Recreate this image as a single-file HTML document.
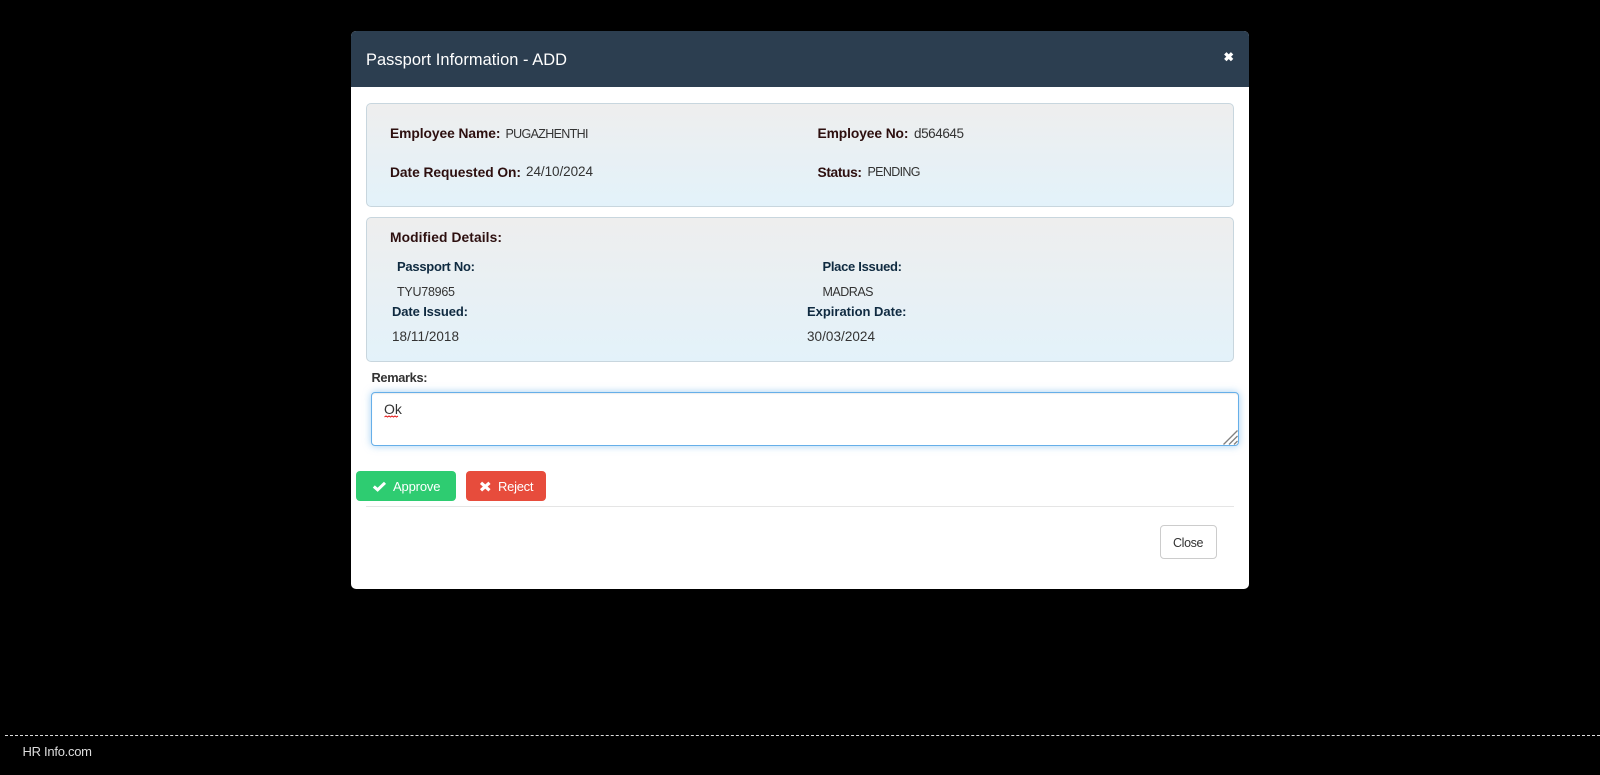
<!DOCTYPE html>
<html lang="en">
<head>
<meta charset="utf-8">
<title>Passport Information - ADD</title>
<style>
html,body{margin:0;padding:0;width:1600px;height:775px;overflow:hidden;background:#000;font-family:"Liberation Sans",sans-serif}
.box{position:absolute;box-sizing:border-box}
.modal{left:351px;top:31px;width:898px;height:558px;background:#fff;border-radius:5px;overflow:hidden}
.head{left:0;top:0;width:898px;height:56px;background:#2c3e50}
.panel{left:366px;width:868px;border:1px solid #c8d6de;border-radius:5px;background:linear-gradient(to bottom,#eeeeee 0%,#e3f2fa 100%)}
textarea{position:absolute;box-sizing:border-box;left:371px;top:392px;width:868px;height:54px;margin:0;padding:6px 12px;border:1px solid #66afe9;border-radius:4px;outline:0;background:#fff;color:#333;font:14px/20px "Liberation Sans",sans-serif;resize:none;overflow:hidden;box-shadow:inset 0 1px 1px rgba(0,0,0,.075),0 0 8px rgba(102,175,233,.6)}
.btn{height:30px;top:471px;border-radius:4px}
.hr{left:366px;top:506px;width:868px;height:1px;background:#e5e5e5}
.close{left:1160px;top:525px;width:57px;height:34px;border:1px solid #ccc;border-radius:4px;background:#fff}
.foot{left:5px;top:735px;width:1595px;height:0;border-top:1px dashed #ddd}
svg{position:absolute;left:0;top:0;width:1600px;height:775px;pointer-events:none}
text{font-family:"Liberation Sans",sans-serif;font-size:13.5px;fill:#333;white-space:pre}
.c{font-size:12.5px}
.l{font-weight:700;fill:#2d0f0f;font-size:13.8px}
.m{font-weight:700;fill:#0f2a40;font-size:13px}
</style>
</head>
<body>
<div class="box modal"><div class="box head"></div></div>
<div class="box panel" style="top:103px;height:104px"></div>
<div class="box panel" style="top:217px;height:145px"></div>
<textarea spellcheck="false">Ok</textarea>
<div class="box btn" style="left:356px;width:100px;background:#2ecc71"></div>
<div class="box btn" style="left:466px;width:80px;background:#e74c3c"></div>
<div class="box hr"></div>
<div class="box close"></div>
<div class="box foot"></div>
<svg viewBox="0 0 1600 775" xmlns="http://www.w3.org/2000/svg">
  <text x="366" y="65" textLength="201" lengthAdjust="spacing" style="font-size:16.4px;fill:#fff">Passport Information - ADD</text>
  <path d="M1225.300 53.300l6.800 6.800M1232.100 53.300l-6.800 6.800" stroke="#fff" stroke-width="3.400" fill="none"/>

  <text class="l" x="390" y="138" textLength="110.500" lengthAdjust="spacing">Employee Name:</text>
  <text class="c" x="505.500" y="138" textLength="83" lengthAdjust="spacing">PUGAZHENTHI</text>
  <text class="l" x="817.500" y="138" textLength="91" lengthAdjust="spacing">Employee No:</text>
  <text x="914" y="138" textLength="50" lengthAdjust="spacing">d564645</text>
  <text class="l" x="390" y="177" textLength="131" lengthAdjust="spacing">Date Requested On:</text>
  <text x="526" y="176" textLength="67" lengthAdjust="spacing">24/10/2024</text>
  <text class="l" x="817.500" y="177" textLength="44.500" lengthAdjust="spacing">Status:</text>
  <text class="c" x="867.500" y="176" textLength="53" lengthAdjust="spacing">PENDING</text>

  <text class="l" x="390" y="242" textLength="112" lengthAdjust="spacing">Modified Details:</text>
  <text class="m" x="397" y="271" textLength="78" lengthAdjust="spacing">Passport No:</text>
  <text class="c" x="397" y="296" textLength="58" lengthAdjust="spacing">TYU78965</text>
  <text class="m" x="822.500" y="271" textLength="79.500" lengthAdjust="spacing">Place Issued:</text>
  <text class="c" x="822.500" y="296" textLength="51" lengthAdjust="spacing">MADRAS</text>
  <text class="m" x="392" y="316" textLength="76" lengthAdjust="spacing">Date Issued:</text>
  <text x="392" y="341" textLength="67" lengthAdjust="spacing">18/11/2018</text>
  <text class="m" x="807" y="316" textLength="99.500" lengthAdjust="spacing">Expiration Date:</text>
  <text x="807" y="341" textLength="68" lengthAdjust="spacing">30/03/2024</text>

  <text x="371.500" y="382" textLength="56" lengthAdjust="spacing" style="font-weight:700;fill:#333;font-size:12.800px">Remarks:</text>
  <path d="M384.500 417l1.500-1 1.500 1 1.500-1 1.500 1 1.500-1 1.500 1 1.500-1 1.500 1 1.500-1" stroke="#e01010" stroke-width="1" fill="none"/>
  <path d="M1223.500 444.500l14-14M1229 444.500l8.500-8.500M1234 444.500l3.500-3.500" stroke="#808080" stroke-width="1.300" fill="none"/>

  <path d="M373.800 486.500l3.800 3.300 7.400-7" stroke="#fff" stroke-width="3" fill="none"/>
  <text x="393" y="491" textLength="47.500" lengthAdjust="spacing" style="fill:#fff;font-size:13px">Approve</text>
  <path d="M481 482.800l8.500 7.500M489.500 482.800l-8.500 7.500" stroke="#fff" stroke-width="3.200" fill="none"/>
  <text x="498" y="491" textLength="35.500" lengthAdjust="spacing" style="fill:#fff;font-size:13px">Reject</text>

  <text x="1173" y="547" textLength="30.500" lengthAdjust="spacing" style="font-size:12.500px">Close</text>
  <text x="22.500" y="756" textLength="69.500" lengthAdjust="spacing" style="fill:#ddd;font-size:13px">HR Info.com</text>
</svg>
</body>
</html>
